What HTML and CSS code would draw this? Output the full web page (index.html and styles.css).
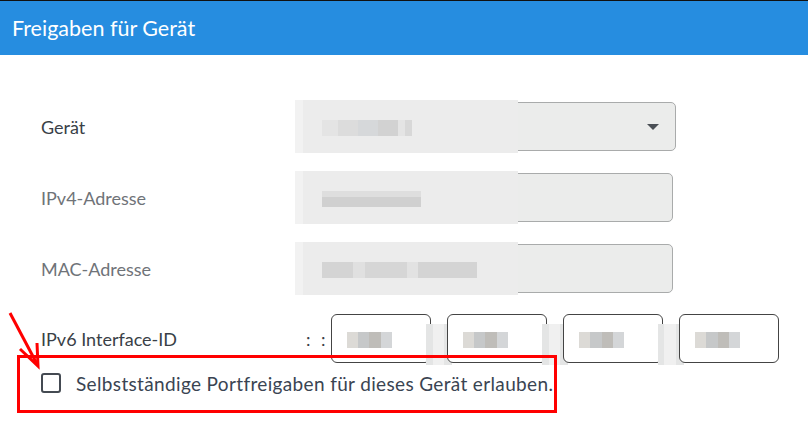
FILE: index.html
```html
<!DOCTYPE html>
<html lang="de">
<head>
    <meta charset="UTF-8">
    <meta name="viewport" content="width=device-width, initial-scale=1.0">
    <title>Freigaben für Gerät</title>
    <link rel="stylesheet" href="styles.css">
</head>
<body>
    <div class="header">Freigaben für Gerät</div>

    <form class="form">
        <div class="row">
            <label class="label">Gerät</label>
            <div class="field">
                <div class="select">
                    <span class="arrow"></span>
                </div>
                <div class="blur blur-wide">
                    <span class="px px-a"></span>
                </div>
            </div>
        </div>

        <div class="row">
            <label class="label muted">IPv4-Adresse</label>
            <div class="field">
                <div class="input"></div>
                <div class="blur blur-wide">
                    <span class="px px-b"></span>
                </div>
            </div>
        </div>

        <div class="row">
            <label class="label muted">MAC-Adresse</label>
            <div class="field">
                <div class="input"></div>
                <div class="blur blur-wide">
                    <span class="px px-c"></span>
                </div>
            </div>
        </div>

        <div class="row">
            <label class="label">IPv6 Interface-ID</label>
            <div class="ipv6">
                <span class="colons">: :</span>
                <div class="part"><span class="px px-d"></span><span class="gap-blur"></span></div>
                <div class="part"><span class="px px-d"></span><span class="gap-blur"></span></div>
                <div class="part"><span class="px px-d"></span><span class="gap-blur"></span></div>
                <div class="part"><span class="px px-d"></span></div>
            </div>
        </div>

        <div class="check-row">
            <span class="checkbox"></span>
            <span class="check-text">Selbstständige Portfreigaben für dieses Gerät erlauben.</span>
            <span class="highlight"></span>
        </div>
    </form>

    <svg class="pointer" width="50" height="70" viewBox="0 300 50 70">
        <line x1="10" y1="313" x2="37" y2="364" stroke="#ff0000" stroke-width="3"/>
        <polyline points="20,349 38,366 37,343" fill="none" stroke="#ff0000" stroke-width="3"/>
    </svg>
</body>
</html>
```

FILE: styles.css
```css
body {
    margin: 0;
    font-family: Lato, "Open Sans", sans-serif;
    background-color: #fff;
    color: #3a3f47;
}

.header {
    border-top: 1px solid #111;
    height: 54px;
    line-height: 54px;
    background-color: #268de0;
    color: #fff;
    font-size: 21.5px;
    padding-left: 12px;
}

.form {
    padding: 47px 0 40px 41px;
}

.row {
    display: grid;
    grid-template-columns: 260px auto;
    align-items: center;
    height: 49px;
    margin-bottom: 22px;
}

.row:nth-child(3) {
    margin-bottom: 21px;
}

.row:nth-child(4) {
    margin-bottom: 10px;
}

.label {
    font-size: 18px;
    color: #3a3f47;
}

.label.muted {
    color: #6f7378;
}

.field {
    position: relative;
    height: 49px;
}

.select, .input {
    box-sizing: border-box;
    height: 49px;
    border: 1px solid #a9abab;
    border-radius: 5px;
    background-color: #ebeceb;
}

.select {
    width: 375px;
    position: relative;
}

.input {
    width: 372px;
}

.arrow {
    position: absolute;
    right: 16px;
    top: 21px;
    width: 0;
    height: 0;
    border-left: 6px solid transparent;
    border-right: 6px solid transparent;
    border-top: 6px solid #4a4f55;
}

.blur {
    position: absolute;
    background-color: #ececec;
}

.blur-wide {
    left: -6px;
    top: -2px;
    width: 223px;
    height: 53px;
    border-left: 8px solid #f2f2f2;
    box-sizing: border-box;
}

.px {
    position: absolute;
    height: 16px;
}

.px-a {
    left: 19px;
    top: 20px;
    width: 90px;
    background: linear-gradient(90deg, #e4e4e4 0 18%, #dcdcdc 18% 40%, #d6d8da 40% 62%, #d2d2d2 62% 84%, #e4e4e4 84% 92%, #d8d8d8 92%);
}

.px-b {
    left: 19px;
    top: 20px;
    width: 99px;
    background: linear-gradient(180deg, #dedede 0 40%, #d0d0d0 40%);
}

.px-c {
    left: 19px;
    top: 20px;
    width: 155px;
    background: linear-gradient(90deg, #d4d4d4 0 20%, #e0e0e0 20% 28%, #d6d6d6 28% 55%, #e2e2e2 55% 62%, #d4d4d4 62%);
}

.ipv6 {
    display: flex;
    align-items: center;
    gap: 16px;
}

.colons {
    font-size: 18px;
    white-space: nowrap;
    margin-left: 5px;
    margin-right: -14px;
    letter-spacing: 3px;
    color: #3a3f47;
}

.part {
    position: relative;
    box-sizing: border-box;
    width: 100px;
    height: 49px;
    border: 1px solid #444;
    border-radius: 6px;
    background-color: #fff;
}

.px-d {
    left: 15px;
    top: 17px;
    width: 45px;
    background: linear-gradient(90deg, #dcdad6 0 25%, #c6c8c9 25% 50%, #bfbdb9 50% 75%, #d4d6d8 75%);
}

.gap-blur {
    position: absolute;
    right: -22px;
    top: 9px;
    width: 26px;
    height: 41px;
    background: linear-gradient(90deg, #e4e5e5 0 25%, #f0f0f0 25% 70%, #e4e5e5 70%);
}

.check-row {
    position: relative;
    display: flex;
    align-items: center;
    gap: 15px;
    height: 20px;
}

.checkbox {
    box-sizing: border-box;
    width: 20px;
    height: 20px;
    border: 2px solid #444a52;
    border-radius: 3px;
}

.check-text {
    font-size: 19px;
    letter-spacing: 0.35px;
    color: #3a4452;
}

.highlight {
    position: absolute;
    left: -24px;
    top: -18px;
    width: 534px;
    height: 52px;
    border: 3px solid #ff0000;
}

.pointer {
    position: absolute;
    left: 0;
    top: 300px;
}
```
